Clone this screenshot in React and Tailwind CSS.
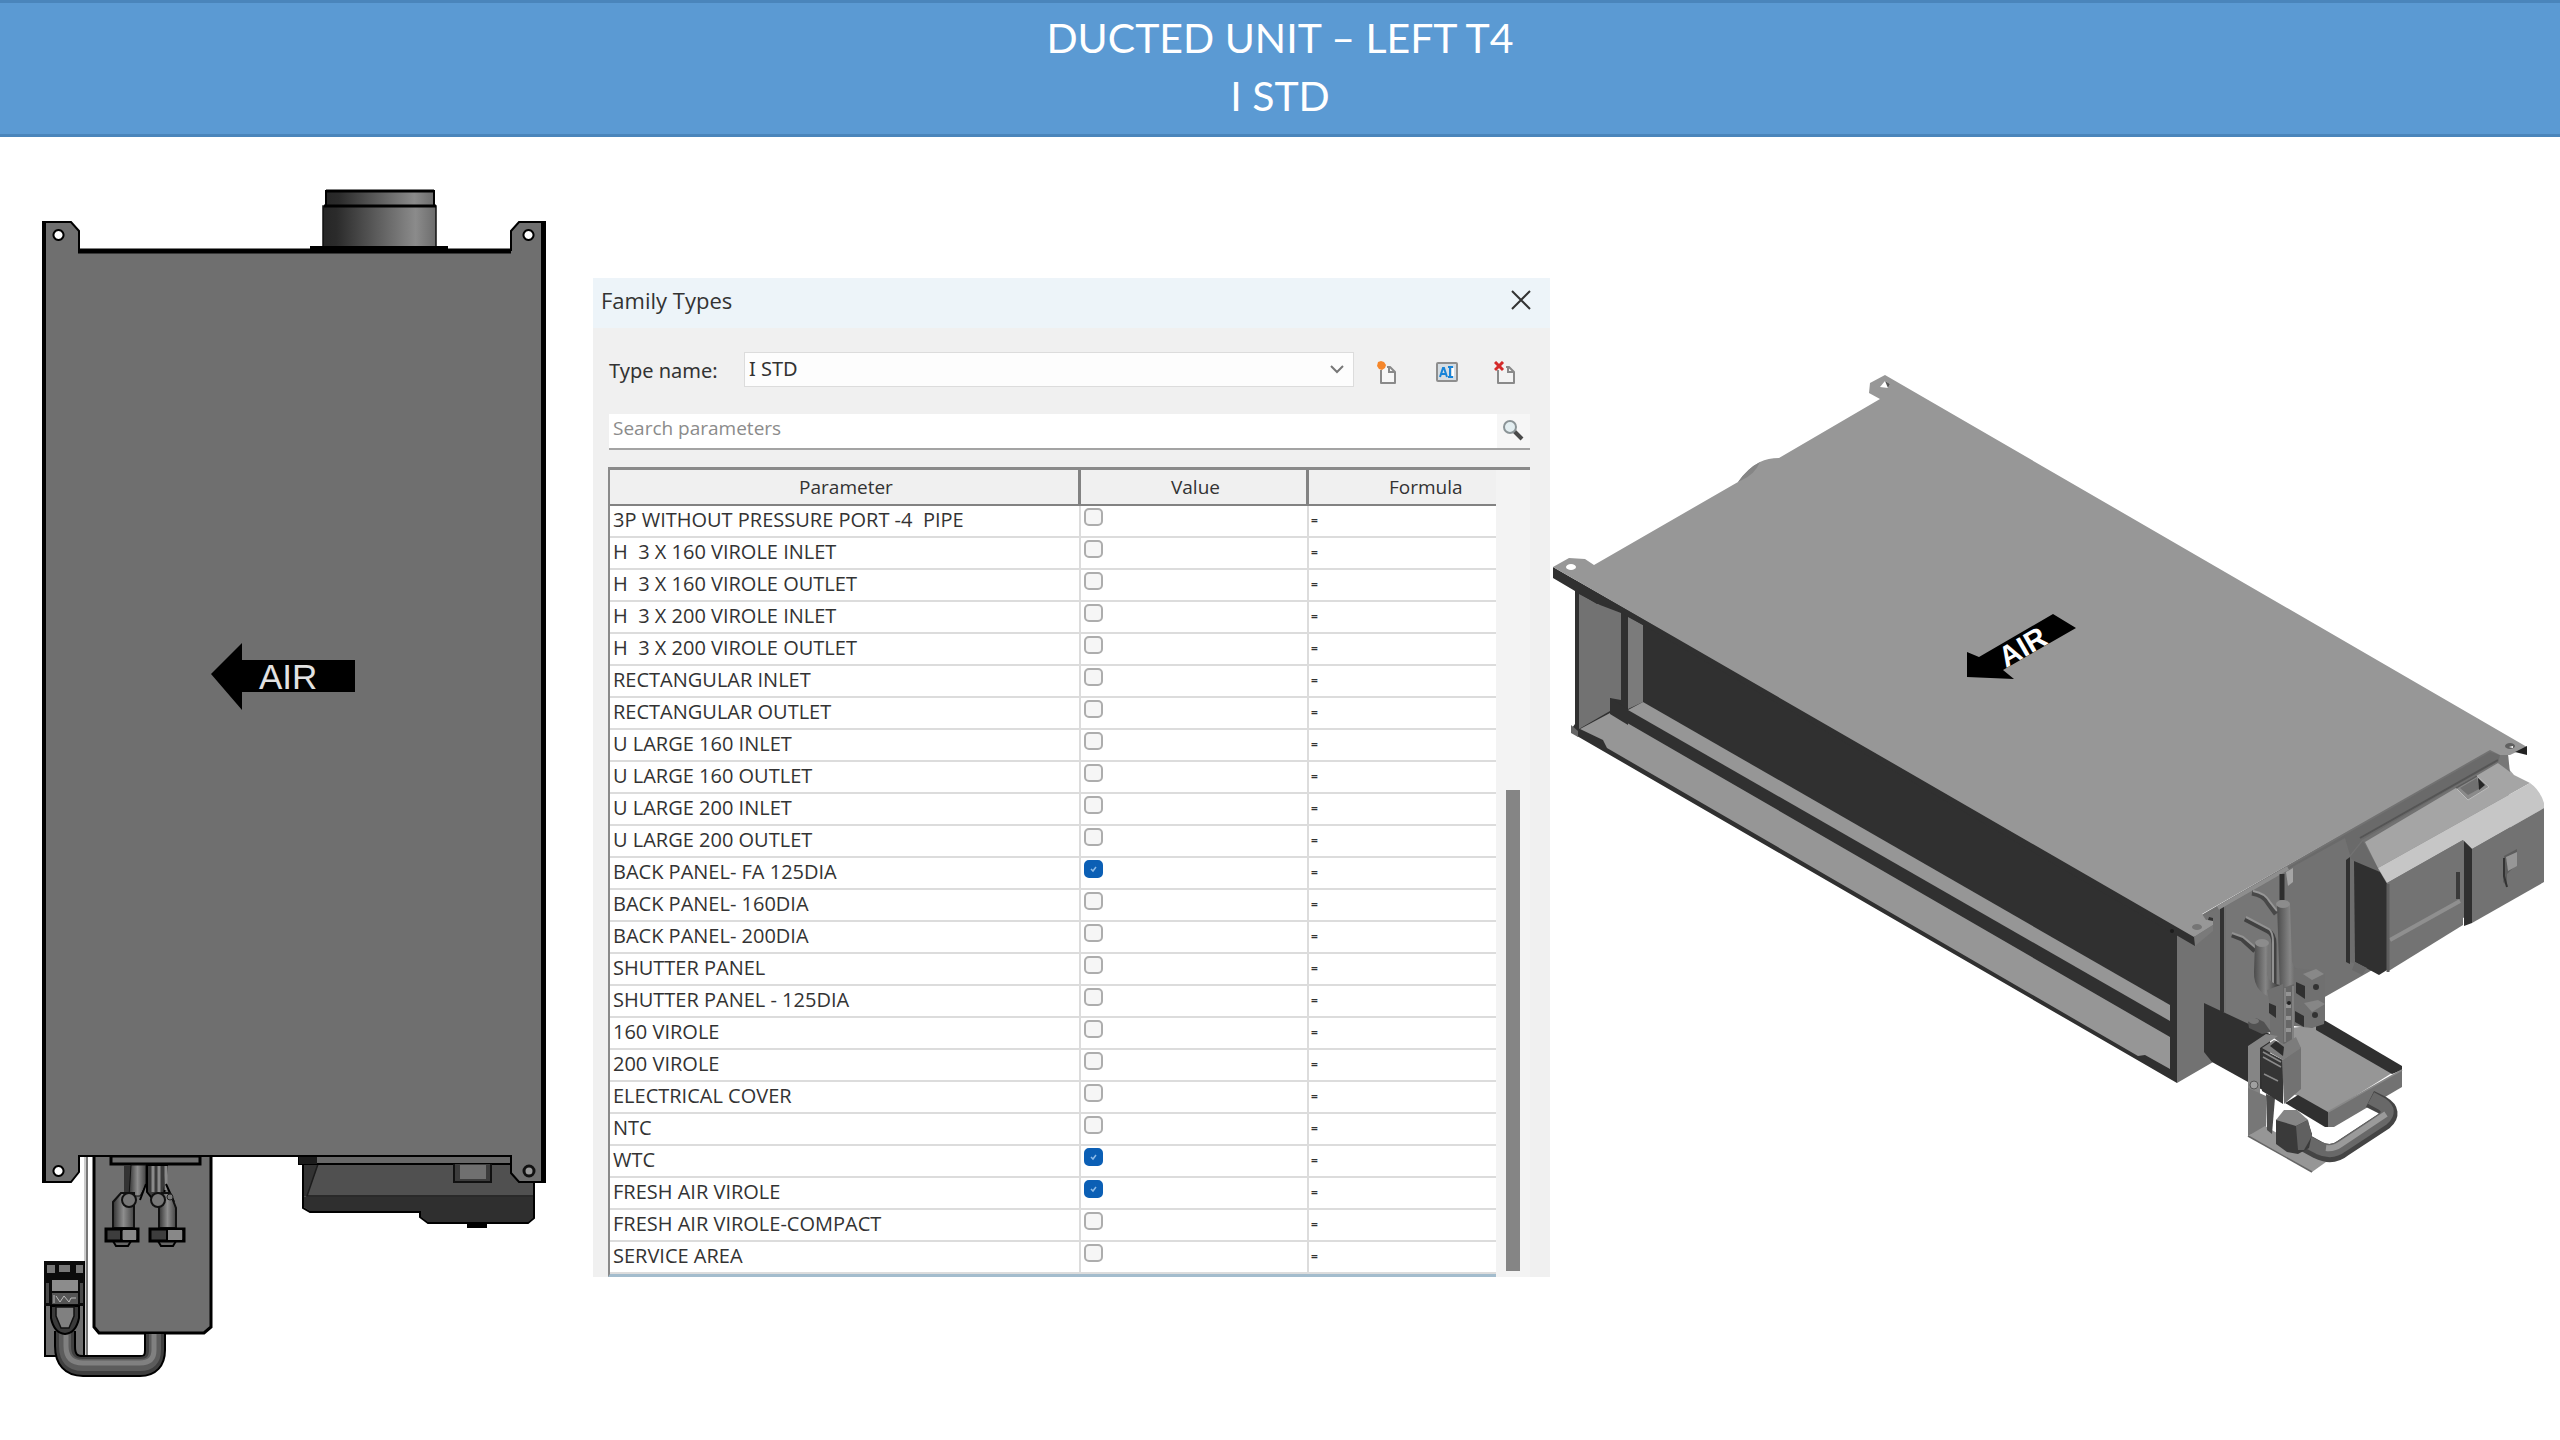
import { useState } from "react";

const initialParameters = [
  { id: "p-3p-4pipe", name: "3P WITHOUT PRESSURE PORT -4  PIPE", value: false },
  { id: "p-h160-in", name: "H  3 X 160 VIROLE INLET", value: false },
  { id: "p-h160-out", name: "H  3 X 160 VIROLE OUTLET", value: false },
  { id: "p-h200-in", name: "H  3 X 200 VIROLE INLET", value: false },
  { id: "p-h200-out", name: "H  3 X 200 VIROLE OUTLET", value: false },
  { id: "p-rect-in", name: "RECTANGULAR INLET", value: false },
  { id: "p-rect-out", name: "RECTANGULAR OUTLET", value: false },
  { id: "p-u160-in", name: "U LARGE 160 INLET", value: false },
  { id: "p-u160-out", name: "U LARGE 160 OUTLET", value: false },
  { id: "p-u200-in", name: "U LARGE 200 INLET", value: false },
  { id: "p-u200-out", name: "U LARGE 200 OUTLET", value: false },
  { id: "p-back-fa", name: "BACK PANEL- FA 125DIA", value: true },
  { id: "p-back-160", name: "BACK PANEL- 160DIA", value: false },
  { id: "p-back-200", name: "BACK PANEL- 200DIA", value: false },
  { id: "p-shutter", name: "SHUTTER PANEL", value: false },
  { id: "p-shutter-125", name: "SHUTTER PANEL - 125DIA", value: false },
  { id: "p-160", name: "160 VIROLE", value: false },
  { id: "p-200", name: "200 VIROLE", value: false },
  { id: "p-cover", name: "ELECTRICAL COVER", value: false },
  { id: "p-ntc", name: "NTC", value: false },
  { id: "p-wtc", name: "WTC", value: true },
  { id: "p-fresh", name: "FRESH AIR VIROLE", value: true },
  { id: "p-fresh-compact", name: "FRESH AIR VIROLE-COMPACT", value: false },
  { id: "p-service", name: "SERVICE AREA", value: false },
];

const NewTypeIcon = () => (
  <svg className="w-6 h-6" viewBox="0 0 24 24" fill="none">
    <path d="M5 9v13h14V11l-5-5h-3" fill="#f7f7f7" stroke="#8a8a8a" strokeWidth="2" strokeLinejoin="round" />
    <path d="M13 6v5h5" stroke="#8a8a8a" strokeWidth="2" />
    <path d="M5 0l3 1 2 3-1 3-3 2-3-1-2-3 1-4z" fill="#f5862a" />
  </svg>
);

const RenameTypeIcon = () => (
  <svg className="w-6 h-6" viewBox="0 0 24 24" fill="none">
    <rect x="2" y="2" width="20" height="18" rx="1" fill="#d5dde3" stroke="#8e8e8e" strokeWidth="2" />
    <path d="M5 16L8 7h1l3 9M6 13h5" stroke="#1683d8" strokeWidth="2" />
    <path d="M13 6h5M13 16h5M15 6v10" stroke="#1683d8" strokeWidth="2" />
    <path d="M18 7v8" stroke="#fff" strokeWidth="2" />
  </svg>
);

const DeleteTypeIcon = () => (
  <svg className="w-6 h-6" viewBox="0 0 24 24" fill="none">
    <path d="M4 9v13h16V11l-5-5h-3" fill="#f3f3f3" stroke="#8a8a8a" strokeWidth="2" strokeLinejoin="round" />
    <path d="M14 6v5h5" stroke="#8a8a8a" strokeWidth="2" />
    <path d="M1 1l8 8M9 1L1 9" stroke="#d42a2a" strokeWidth="3" />
  </svg>
);

const SearchIcon = () => (
  <svg className="w-6 h-6" viewBox="0 0 24 24" fill="none">
    <path d="M13 12l8 8" stroke="#4a4a4a" strokeWidth="4" />
    <circle cx="9" cy="8" r="6" fill="#e3eef1" stroke="#8b9497" strokeWidth="2" />
  </svg>
);

const CloseIcon = () => (
  <svg className="w-5 h-5" viewBox="0 0 20 20">
    <path d="M1 1l18 18M19 1L1 19" stroke="#333" strokeWidth="2" />
  </svg>
);

/* Plan view of the unit */
function PlanView() {
  return (
    <svg className="w-full mt-[43px]" viewBox="0 180 593 1210" role="img">
      <defs>
        <linearGradient id="collar" x1="0" x2="1" y1="0" y2="0">
          <stop offset="0" stopColor="#262626" />
          <stop offset="0.12" stopColor="#2b2b2b" />
          <stop offset="0.82" stopColor="#8b8b8b" />
          <stop offset="1" stopColor="#6c6c6c" />
        </linearGradient>
        <linearGradient id="tube" x1="0" x2="1" y1="0" y2="0">
          <stop offset="0" stopColor="#333" />
          <stop offset="0.5" stopColor="#8d8d8d" />
          <stop offset="1" stopColor="#444" />
        </linearGradient>
      </defs>

      {/* fresh air collar */}
      <rect x="326" y="191" width="108" height="16" fill="url(#collar)" stroke="#000" strokeWidth="2" />
      <rect x="323" y="206" width="113" height="43" fill="url(#collar)" stroke="#111" strokeWidth="1.5" />
      <path d="M326 191H434M324 206H436" stroke="#000" strokeWidth="3" />
      <path d="M310 248H448" stroke="#000" strokeWidth="4" />

      {/* electrical box */}
      <path d="M303 1160V1208L310 1212H420V1217L428 1223H528L534 1218V1160z" fill="#505050" stroke="#000" strokeWidth="2" />
      <path d="M304 1197H533V1218L528 1222H428L421 1217V1211H310L304 1207z" fill="#2f2f2f" />
      <path d="M304 1164H318L307 1196H304z" fill="#333" />
      <path d="M318 1164L307 1196H533" fill="none" stroke="#1c1c1c" strokeWidth="1.5" />
      <rect x="299" y="1156" width="213" height="8" fill="#686868" stroke="#000" strokeWidth="2" />
      <rect x="299" y="1156" width="18" height="8" fill="#1b1b1b" />
      <path d="M454 1164V1182H491V1164" fill="#3c3c3c" stroke="#111" strokeWidth="2" />
      <rect x="460" y="1165" width="26" height="14" fill="#707070" />
      <rect x="467" y="1222" width="20" height="6" fill="#000" />

      {/* drain tray */}
      <path d="M86 1156V1358" stroke="#777" strokeWidth="4" />
      <path d="M85 1156V1358" stroke="#ccc" strokeWidth="2" />
      <path d="M94 1150V1327L99 1333H204L211 1327V1150z" fill="#6f6f6f" stroke="#000" strokeWidth="3" />
      <rect x="111" y="1156" width="89" height="8" fill="#6f6f6f" stroke="#000" strokeWidth="3" />

      {/* valve pipes */}
      <rect x="124" y="1165" width="8" height="30" fill="#333" />
      <path d="M131 1165H146V1185L140 1196H129z" fill="url(#tube)" stroke="#111" strokeWidth="1" />
      <path d="M147 1165V1192L155 1202L164 1196L167 1165z" fill="#3b3b3b" stroke="#000" strokeWidth="2" />
      <path d="M153 1166V1192M159 1166V1192M166 1166V1190" stroke="#8a8a8a" strokeWidth="3" />
      <path d="M146 1184L140 1200M166 1184L174 1202" stroke="#000" strokeWidth="2" />
      <path d="M113 1228V1202L121 1193H134V1228z" fill="url(#tube)" stroke="#111" strokeWidth="2" />
      <path d="M159 1228V1202L162 1193H170L176 1208V1228z" fill="url(#tube)" stroke="#111" strokeWidth="2" />
      <circle cx="129" cy="1200" r="7" fill="#777" stroke="#111" strokeWidth="2" />
      <circle cx="158" cy="1200" r="7" fill="#777" stroke="#111" strokeWidth="2" />
      <circle cx="170" cy="1197" r="3" fill="#777" stroke="#222" strokeWidth="1" />
      <path d="M113 1241H131L128 1246H116zM158 1241H176L173 1246H161z" fill="#666" stroke="#000" strokeWidth="2" />
      <rect x="106" y="1229" width="32" height="12" fill="#3d3d3d" stroke="#000" strokeWidth="3" />
      <rect x="123" y="1230" width="13" height="10" fill="#888" />
      <rect x="150" y="1229" width="34" height="12" fill="#3d3d3d" stroke="#000" strokeWidth="3" />
      <rect x="168" y="1230" width="14" height="10" fill="#888" />
      <path d="M121 1229V1241M167 1229V1241" stroke="#000" strokeWidth="2" />

      {/* valve actuator and drain hose */}
      <rect x="45" y="1262" width="39" height="94" fill="#6f6f6f" stroke="#000" strokeWidth="2" />
      <rect x="44" y="1261" width="40" height="45" fill="#0b0b0b" />
      <path d="M47 1265h8v8h-8zM59 1265h11v7h-11zM76 1265h7v8h-7z" fill="#777" />
      <path d="M46 1283h3v20h-3zM80 1283h3v20h-3z" fill="#4a4a4a" />
      <rect x="52" y="1280" width="26" height="11" fill="#8c8c8c" />
      <rect x="52" y="1293" width="26" height="11" fill="#555" />
      <path d="M56 1296l4 6 4-6 5 6 2-4h5M54 1295v8" fill="none" stroke="#bbb" strokeWidth="1" />
      <path d="M65 1331V1346Q65 1366 83 1366H140Q155 1366 155 1350V1334" fill="none" stroke="#000" strokeWidth="22" />
      <path d="M65 1331V1346Q65 1366 83 1366H140Q155 1366 155 1350V1334" fill="none" stroke="#3f3f3f" strokeWidth="18" />
      <path d="M65 1331V1346Q65 1365 83 1365H140Q155 1365 155 1350V1334" fill="none" stroke="#5c5c5c" strokeWidth="12" />
      <path d="M66 1331V1346Q66 1363 83 1363H140Q154 1363 154 1350V1334" fill="none" stroke="#808080" strokeWidth="5" />
      <path d="M51 1306V1318Q54 1333 65 1334Q76 1333 79 1318V1306z" fill="#3a3a3a" stroke="#000" strokeWidth="2" />
      <path d="M56 1307V1316L61 1328H69L74 1316V1307z" fill="#808080" stroke="#111" strokeWidth="1.5" />

      {/* casing */}
      <path
        fillRule="evenodd"
        d="M43 222H71L79 231V250H511V231L519 222H545V1182H519L511 1173V1156H79V1172L71 1182H43zM58.500 230a5 5 0 1 0 .01 0zM528.500 230a5 5 0 1 0 .01 0zM58.500 1166a5 5 0 1 0 .01 0z"
        fill="#6f6f6f"
        stroke="#000"
        strokeWidth="2"
      />
      <path d="M44 221V1182M543 221V1182" stroke="#000" strokeWidth="4" />
      <path d="M78 251H511" stroke="#000" strokeWidth="5" />
      <circle cx="529" cy="1171" r="5" fill="#999" stroke="#111" strokeWidth="3" />

      {/* air direction */}
      <path d="M211 674L242 643V660H355V692H242V710z" fill="#000" />
      <text x="259" y="689" fill="#e2e2e2" fontSize="35" className="font-['Liberation_Sans',sans-serif]">
        AIR
      </text>
    </svg>
  );
}

/* Isometric view of the unit */
function IsometricView() {
  return (
    <svg className="w-full mt-[223px]" viewBox="1550 360 1010 820" role="img">
      <defs>
        <linearGradient id="riser" x1="0" x2="1" y1="0" y2="0">
          <stop offset="0" stopColor="#4c4c4c" />
          <stop offset="0.45" stopColor="#858585" />
          <stop offset="1" stopColor="#343434" />
        </linearGradient>
      </defs>

      {/* outlet opening */}
      <path d="M1575 580L2195 930L2177 1083L1577 736L1572 728L1575 724z" fill="#303030" />
      <path d="M1579 594L1600 605L1621 613V700L1610 698V711L1579 729z" fill="#727272" />
      <path d="M1628 617L1643 625V702L1628 709z" fill="#7b7b7b" />
      <path d="M1628 710L1643 702L2170 1005V1021z" fill="#969696" />
      <path d="M1610 713L2170 1037V1069L2145 1055L2138 1056L1607 748L1603 740L1580 729z" fill="#969696" />
      <path d="M1610 698L1628 709V725L1610 714z" fill="#303030" />
      <path d="M1571 725L1578 731V737L1571 733z" fill="#666" />

      {/* side panel */}
      <path d="M2177 930L2203 914L2490 748L2508 752L2512 890L2367 973L2323 998L2177 1083z" fill="#727272" />
      <path d="M2226 906L2280 875V1036L2226 1014z" fill="#767676" />
      <path d="M2222 905V1012" stroke="#333" strokeWidth="4" />
      <path d="M2203 916L2490 752L2506 757V770L2497 762L2362 840L2350 855L2345 838z" fill="#6a6a6a" />
      <path d="M2218 908L2288 868" stroke="#8e8e8e" strokeWidth="4" />
      <path d="M2360 838L2498 760" stroke="#555" strokeWidth="2" />
      <path d="M2282 874V900" stroke="#2e2e2e" strokeWidth="5" />
      <path d="M2286 872L2293 868V882L2288 886z" fill="#a5a5a5" />

      {/* top cover */}
      <path d="M1553 567V578L1597 604L1605 603L2195 946V936z" fill="#303030" />
      <path
        d="M1885 375L1870 383L1869 393L1880 399L1779 458Q1768 458 1760 462Q1748 468 1738 482L1594 565L1585 559L1569 558L1553 567L2194 937L2213 925L2213 919L2206 920L2202 914L2490 750L2500 755L2510 755L2527 747z"
        fill="#979797"
      />
      <path d="M1738 482Q1748 468 1760 462Q1755 474 1742 480z" fill="#858585" />
      <path d="M2194 937L2213 925V931L2195 946z" fill="#7a7a7a" />
      <path d="M2515 752L2527 746V755L2523 754z" fill="#222" />
      <path d="M1880 387L1885 381L1890 384L1888 388z" fill="#fff" />
      <path d="M1885 381L1890 384L1888 388z" fill="#555" />
      <ellipse cx="1571" cy="567" rx="5" ry="3" fill="#fff" />
      <ellipse cx="2197" cy="927" rx="5" ry="3" fill="#757575" />
      <ellipse cx="2510" cy="746" rx="5" ry="3" fill="#606060" />
      <path d="M2509 747l4-1v2z" fill="#fff" />
      <path d="M2209 917l4 1v3l-5-1z" fill="#333" />
      <circle cx="2172" cy="931" r="2" fill="#1c1c1c" />

      {/* air direction */}
      <path d="M1967 652L1979 657L2053 614L2076 628L2003 670L2014 679L1967 677z" fill="#000" />
      <text
        x="2006"
        y="668"
        transform="rotate(-30 2006 668)"
        fill="#fff"
        fontSize="29"
        className="font-['Liberation_Sans',sans-serif] font-bold"
      >
        AIR
      </text>

      {/* electrical box */}
      <path d="M2346 860L2350 857V964L2346 962z" fill="#303030" />
      <path d="M2350 857L2363 841L2378 868V876L2353 864z" fill="#696969" />
      <path d="M2350 858L2356 862V964L2350 962z" fill="#6d6d6d" />
      <path d="M2354 861L2380 872L2387 884V970L2379 975L2355 962z" fill="#303030" />
      <path d="M2355 962L2367 968L2362 975L2352 970z" fill="#6a6a6a" />
      <path d="M2365 842L2498 763L2508 768L2514 775L2530 783L2378 868z" fill="#a5a5a5" />
      <path d="M2500 755L2508 755L2510 772L2498 763z" fill="#777" />
      <path d="M2378 868L2530 783Q2540 790 2544 803V808L2472 849L2463 840L2387 883z" fill="#c6c6c6" />
      <path d="M2387 883L2463 840V925L2387 972z" fill="#737373" />
      <path d="M2464 841L2472 849V923L2464 926z" fill="#303030" />
      <path d="M2472 849L2544 808V882L2472 923z" fill="#727272" />
      <path d="M2390 940L2460 901" stroke="#8f8f8f" strokeWidth="4" />
      <path d="M2388 884V972" stroke="#5e5e5e" strokeWidth="3" />
      <path d="M2458 872V899" stroke="#3a3a3a" strokeWidth="4" />
      <path d="M2504 856L2517 849V864L2507 874V886L2503 882z" fill="#5d5d5d" />
      <path d="M2506 857L2517 852V866L2508 871z" fill="#979797" />
      <path d="M2504 858V876L2507 887" fill="none" stroke="#333" strokeWidth="2" />
      <path d="M2456 788L2477 776L2489 787L2468 800z" fill="#8b8b8b" stroke="#bcbcbc" strokeWidth="1" />
      <path d="M2456 788L2477 776" stroke="#5c5c5c" strokeWidth="1.5" />
      <path d="M2460 788L2477 778L2479 789L2468 795z" fill="#707070" />
      <path d="M2478 778L2485 785L2479 790z" fill="#262626" />

      {/* condensate tray */}
      <path d="M2204 1003L2270 1034V1094L2248 1082L2212 1062L2204 1052z" fill="#303030" />
      <path d="M2290 1028L2318 1025L2392 1073L2328 1113L2290 1092z" fill="#969696" />
      <path d="M2316 1022L2324 1020L2402 1066V1070L2392 1074L2316 1030z" fill="#303030" />
      <path d="M2285 1103L2298 1095L2328 1112L2331 1127H2325z" fill="#303030" />
      <path d="M2328 1112L2402 1070V1087L2334 1127H2328z" fill="#727272" />
      <path d="M2328 1112L2402 1070" stroke="#888" strokeWidth="1.5" />

      {/* refrigerant pipes */}
      <path d="M2252 893Q2264 895 2268 903L2276 914" fill="none" stroke="#484848" strokeWidth="5" />
      <path d="M2253 891Q2265 893 2270 902L2277 911" fill="none" stroke="#979797" strokeWidth="2" />
      <path d="M2245 919L2268 931Q2274 934 2274 944V985" fill="none" stroke="#414141" strokeWidth="5" />
      <path d="M2246 917L2269 929Q2273 932 2273 942V985" fill="none" stroke="#929292" strokeWidth="2" />
      <path d="M2232 935L2242 939L2255 951" fill="none" stroke="#414141" strokeWidth="5" />
      <path d="M2232 933L2243 937L2256 948" fill="none" stroke="#929292" strokeWidth="2" />
      <path d="M2277 904H2290L2292 962Q2296 972 2306 974L2302 988Q2287 984 2283 992H2280z" fill="url(#riser)" />
      <ellipse cx="2283" cy="904" rx="7" ry="4" fill="#8c8c8c" />
      <path d="M2255 943H2268L2267 975Q2270 984 2280 985V1000Q2253 995 2254 972z" fill="url(#riser)" />
      <ellipse cx="2262" cy="943" rx="7" ry="4" fill="#8c8c8c" />
      <path d="M2267 990L2283 984V1045L2270 1035V1005z" fill="#707070" />
      <path d="M2269 1003L2276 1006V1018L2269 1013z" fill="#303030" />

      {/* valve bodies */}
      <path d="M2294 968L2312 970L2325 974V1004L2324 1024L2312 1028L2294 1026z" fill="#707070" />
      <path d="M2296 982L2305 986V999L2296 993z" fill="#303030" />
      <path d="M2303 974L2316 969L2324 974L2312 980z" fill="#888" />
      <path d="M2296 1008L2310 1002L2325 1002V1020L2312 1028L2297 1022z" fill="#707070" />
      <path d="M2295 1011L2304 1016V1027L2295 1022z" fill="#303030" />
      <path d="M2304 1003L2318 1000L2325 1004L2312 1012z" fill="#868686" />
      <circle cx="2316" cy="987" r="3" fill="#333" />
      <circle cx="2315" cy="1015" r="3" fill="#333" />
      <path d="M2283 988L2294 984V1044H2283z" fill="#676767" />
      <path d="M2285 988V1042M2293 986V1042" stroke="#8a8a8a" strokeWidth="1.500" />
      <path d="M2286 994h5M2286 1006h5M2286 1018h5M2286 1030h5" stroke="#949494" strokeWidth="4" />
      <circle cx="2289" cy="1003" r="2" fill="#222" />
      <path d="M2248 1022L2256 1018L2264 1022L2271 1032L2262 1034L2249 1028z" fill="#525252" />
      <ellipse cx="2254" cy="1021" rx="5" ry="3" fill="#777" />

      {/* mounting bracket */}
      <path d="M2248 1046L2266 1034L2278 1036L2260 1048V1094L2248 1090z" fill="#858585" />
      <path d="M2248 1088L2266 1096V1128L2248 1136z" fill="#777" />
      <path d="M2248 1136L2265 1126L2326 1162L2312 1172z" fill="#969696" />
      <path d="M2248 1136L2312 1172" stroke="#666" strokeWidth="1.5" />
      <circle cx="2254" cy="1085" r="4" fill="#a0a0a0" stroke="#555" strokeWidth="1" />
      <path d="M2266 1094L2275 1098L2272 1134L2267 1130z" fill="#4a4a4a" />

      {/* actuator */}
      <path d="M2260 1048L2283 1060V1104L2262 1091z" fill="#353535" />
      <path d="M2282 1060L2301 1047V1089L2284 1104z" fill="#727272" />
      <path d="M2262 1048L2274 1040L2284 1044L2296 1037L2301 1048L2283 1060z" fill="#7c7c7c" />
      <path d="M2270 1046L2276 1041L2284 1047L2283 1056z" fill="#2c2c2c" />
      <path d="M2263 1052L2281 1062M2263 1057L2281 1067M2264 1074L2278 1081" stroke="#8a8a8a" strokeWidth="1.500" />

      {/* drain hose */}
      <path d="M2370 1099L2382 1105Q2394 1112 2384 1121L2343 1148Q2332 1157 2318 1150L2298 1139" fill="none" stroke="#444" strokeWidth="18" />
      <path d="M2371 1098L2382 1104Q2392 1111 2383 1119L2342 1146Q2332 1154 2319 1148L2298 1137" fill="none" stroke="#686868" strokeWidth="13" />
      <path d="M2386 1114L2341 1144Q2334 1149 2326 1148" fill="none" stroke="#9a9a9a" strokeWidth="6" />
      <path d="M2276 1120L2290 1112L2307 1119L2312 1134L2309 1148L2298 1154L2287 1152L2276 1144z" fill="#3a3a3a" />
      <path d="M2276 1120L2284 1110L2297 1110L2308 1120L2296 1126z" fill="#858585" />
      <path d="M2296 1126L2308 1120L2312 1136L2304 1150L2298 1150z" fill="#606060" />
    </svg>
  );
}

function FamilyTypesDialog() {
  const [parameters, setParameters] = useState(initialParameters);

  const toggle = (id) =>
    setParameters((prev) =>
      prev.map((p) => (p.id === id ? { ...p, value: !p.value } : p))
    );

  return (
    <section className="mt-[141px] bg-[#f0f0f0] text-[#333] font-['Open_Sans',sans-serif]">
      {/* Title bar */}
      <div className="h-[50px] pl-2 pr-[19px] pb-[6px] flex items-center justify-between bg-[#edf4f9]">
        <h2 className="text-[22px]">Family Types</h2>
        <button type="button" className="flex" aria-label="Close">
          <CloseIcon />
        </button>
      </div>

      {/* Type selector */}
      <div className="pt-6 pl-4 pr-8 flex items-center font-['Noto_Sans',sans-serif]">
        <label htmlFor="type-name" className="pt-[2px] w-[135px] text-[20px]">
          Type name:
        </label>
        <div className="relative flex-1">
          <select
            id="type-name"
            className="block w-full h-[35px] pl-1 pb-[2px] appearance-none bg-[#fdfdfd] border border-[#dcdcdc] text-[20px] leading-[28px]"
          >
            <option>I STD</option>
          </select>
          <svg className="absolute right-[9px] top-3 w-4 h-3 pointer-events-none" viewBox="0 0 16 12" fill="none">
            <path d="M2 2l6 6 6-6" stroke="#777" strokeWidth="2" />
          </svg>
        </div>
        <div className="pt-[6px] pl-[22px] flex gap-[35px]">
          <button type="button" className="flex" aria-label="New type">
            <NewTypeIcon />
          </button>
          <button type="button" className="flex" aria-label="Rename type">
            <RenameTypeIcon />
          </button>
          <button type="button" className="flex" aria-label="Delete type">
            <DeleteTypeIcon />
          </button>
        </div>
      </div>

      {/* Search */}
      <div className="mt-[27px] ml-4 mr-5 h-9 flex border-b-2 border-[#a3a3a3]">
        <input
          type="search"
          aria-label="Search parameters"
          placeholder="Search parameters"
          className="flex-1 pl-1 pb-[6px] bg-white text-[19px] outline-none placeholder:text-[#8b8b8b]"
        />
        <button type="button" className="w-[33px] pt-[5px] pl-1 flex items-start bg-[#f6f6f6]" aria-label="Search">
          <SearchIcon />
        </button>
      </div>

      {/* Parameter grid */}
      <div className="mt-[17px] ml-[15px] mr-5 flex border-t-3 border-[#8a8a8a]">
        <table className="flex-1 table-fixed border-separate border-spacing-0 border-l-2 border-[#8a8a8a] border-b-3 border-b-[#a3bccd] bg-white text-left">
          <colgroup>
            <col className="w-[471px]" />
            <col className="w-[228px]" />
            <col />
          </colgroup>
          <thead className="bg-[#f0f0f0] text-[19px] leading-[32px]">
            <tr>
              <th className="h-9 p-0 pl-1 font-normal text-center border-r-3 border-b-2 border-[#828282]">Parameter</th>
              <th className="p-0 pl-1 font-normal text-center border-r-3 border-b-2 border-[#828282]">Value</th>
              <th className="p-0 pl-20 font-normal border-b-2 border-[#828282]">Formula</th>
            </tr>
          </thead>
          <tbody>
            {parameters.map((p) => (
              <tr key={p.id}>
                <td className="h-8 p-0 pl-[3px] pb-[2px] border-r-2 border-b-2 border-[#dcdcdc] text-[20px] leading-[28px] whitespace-pre">
                  <label htmlFor={p.id}>{p.name}</label>
                </td>
                <td className="p-0 pl-[3px] pb-2 border-r-2 border-b-2 border-[#dcdcdc]">
                  <span className="relative block w-[19px] h-[18px]">
                    <input
                      id={p.id}
                      type="checkbox"
                      checked={p.value}
                      onChange={() => toggle(p.id)}
                      className="block w-full h-full appearance-none rounded-[5px] border-2 border-[#adadad] bg-[#f6f6f6] checked:border-[#0b5fb5] checked:bg-[#0b5fb5]"
                    />
                    {p.value && (
                      <svg className="absolute inset-0 w-full h-full pointer-events-none" viewBox="0 0 19 18" fill="none">
                        <path d="M7 9l2 2 3-4" stroke="#8dbbe8" strokeWidth="1.500" />
                      </svg>
                    )}
                  </span>
                </td>
                <td className="p-0 pl-[2px] border-b-2 border-[#dcdcdc] text-[12px] leading-[20px] font-bold">=</td>
              </tr>
            ))}
          </tbody>
        </table>
        {/* Scrollbar */}
        <div className="w-[34px] pb-[6px] flex flex-col justify-end items-center bg-[#f3f3f3]">
          <div className="w-[14px] h-3/5 bg-[#858585]" />
        </div>
      </div>
    </section>
  );
}

export default function App() {
  return (
    <div className="min-h-screen bg-white">
      <header className="pt-[6px] pb-[9px] bg-[#5b9ad3] border-y-3 border-[#4a85bb] text-center text-white">
        <h1 className="text-[41px] leading-[58px] font-['Lato',sans-serif]">
          DUCTED UNIT – LEFT T4
          <br />I STD
        </h1>
      </header>
      <main className="grid grid-cols-[593fr_957fr_1010fr] items-start">
        <PlanView />
        <FamilyTypesDialog />
        <IsometricView />
      </main>
    </div>
  );
}
